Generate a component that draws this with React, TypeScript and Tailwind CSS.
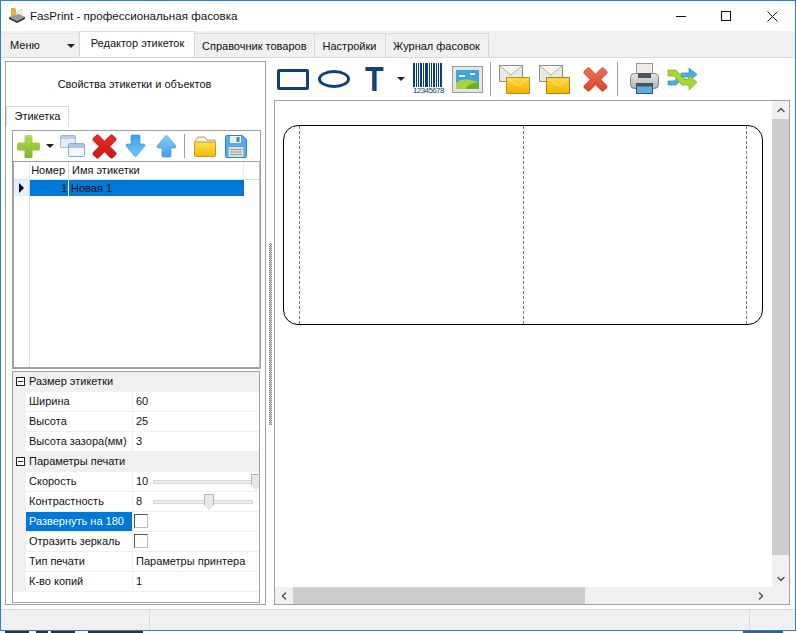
import { ChevronUp, ChevronDown, ChevronLeft, ChevronRight } from "lucide-react";

// Small toolbar icons drawn to match the app's glossy bitmap set
function PlusIcon() {
  return (
    <svg width="25" height="25" viewBox="0 0 25 25">
      <defs>
        <linearGradient id="plusFill" x1="0" y1="0" x2="0" y2="1">
          <stop offset="0" stopColor="#b5dc5a" />
          <stop offset="1" stopColor="#7db52a" />
        </linearGradient>
      </defs>
      <path
        d="M10 1h5a1.500 1.500 0 0 1 1.500 1.500V8.500h6A1.500 1.500 0 0 1 24 10v5a1.500 1.500 0 0 1-1.500 1.500h-6v6A1.500 1.500 0 0 1 15 24h-5a1.500 1.500 0 0 1-1.500-1.500v-6h-6A1.500 1.500 0 0 1 1 15v-5a1.500 1.500 0 0 1 1.500-1.500h6v-6A1.500 1.500 0 0 1 10 1z"
        fill="url(#plusFill)"
      />
    </svg>
  );
}

function RedX({ id, top, bottom, stroke }: { id: string; top: string; bottom: string; stroke: string }) {
  return (
    <svg width="27" height="27" viewBox="0 0 27 27">
      <defs>
        <linearGradient id={id} x1="0" y1="0" x2="0" y2="1">
          <stop offset="0" stopColor={top} />
          <stop offset="1" stopColor={bottom} />
        </linearGradient>
      </defs>
      <path
        d="M5 2.500a2 2 0 0 1 2.800 0l5.700 5.700 5.700-5.700a2 2 0 0 1 2.800 0l2.500 2.500a2 2 0 0 1 0 2.800l-5.700 5.700 5.700 5.700a2 2 0 0 1 0 2.800l-2.500 2.500a2 2 0 0 1-2.800 0l-5.700-5.700-5.700 5.700a2 2 0 0 1-2.800 0l-2.500-2.500a2 2 0 0 1 0-2.800l5.700-5.700-5.700-5.700a2 2 0 0 1 0-2.800z"
        fill={`url(#${id})`}
        stroke={stroke}
        strokeWidth="0.8"
      />
    </svg>
  );
}

function Windows() {
  return (
    <svg width="25" height="22" viewBox="0 0 25 22">
      <rect x="0.500" y="0.500" width="15" height="12" rx="1" fill="#e3edf7" stroke="#9dbbd9" />
      <rect x="1" y="1" width="14" height="3" fill="#b5cfe9" />
      <rect x="8.500" y="8.500" width="16" height="13" rx="1" fill="#f2f6fb" stroke="#86abd0" />
      <rect x="9" y="9" width="15" height="4" fill="#a9c6e4" />
    </svg>
  );
}

function ArrowDown() {
  return (
    <svg width="21" height="24" viewBox="0 0 21 24">
      <defs>
        <linearGradient id="downFill" x1="0" y1="0" x2="0" y2="1">
          <stop offset="0" stopColor="#3f9fe8" />
          <stop offset="1" stopColor="#79c3f5" />
        </linearGradient>
      </defs>
      <path
        d="M7 1h7a1 1 0 0 1 1 1v8h3.500a1.500 1.500 0 0 1 1 2.600l-8 9.400a1.300 1.300 0 0 1-2 0l-8-9.400a1.500 1.500 0 0 1 1-2.600H6V2a1 1 0 0 1 1-1z"
        fill="url(#downFill)"
        stroke="#3a8ed0"
        strokeWidth="0.6"
      />
    </svg>
  );
}

function ArrowUp() {
  return (
    <svg width="21" height="24" viewBox="0 0 21 24">
      <defs>
        <linearGradient id="upFill" x1="0" y1="0" x2="0" y2="1">
          <stop offset="0" stopColor="#8accf7" />
          <stop offset="1" stopColor="#3f9fe8" />
        </linearGradient>
      </defs>
      <path
        d="M7 23h7a1 1 0 0 0 1-1v-8h3.500a1.500 1.500 0 0 0 1-2.600l-8-9.400a1.300 1.300 0 0 0-2 0l-8 9.400a1.500 1.500 0 0 0 1 2.600H6v8a1 1 0 0 0 1 1z"
        fill="url(#upFill)"
        stroke="#3a8ed0"
        strokeWidth="0.6"
      />
    </svg>
  );
}

function Folder() {
  return (
    <svg width="22" height="22" viewBox="0 0 22 22">
      <defs>
        <linearGradient id="folderFill" x1="0" y1="0" x2="0" y2="1">
          <stop offset="0" stopColor="#ffe14a" />
          <stop offset="1" stopColor="#f8b800" />
        </linearGradient>
      </defs>
      <path d="M1 6l3-4h7l2 3h8v3H1z" fill="#f5f1dc" stroke="#a08a3a" strokeWidth="0.8" />
      <rect x="0.500" y="7" width="21" height="14.500" rx="1" fill="url(#folderFill)" stroke="#a8862a" strokeWidth="0.8" />
    </svg>
  );
}

function Floppy() {
  return (
    <svg width="22" height="23" viewBox="0 0 22 23">
      <path d="M1.500 0.500h16l4 4v17a1 1 0 0 1-1 1h-19a1 1 0 0 1-1-1v-20a1 1 0 0 1 1-1z" fill="#55a9ec" stroke="#2f86cc" />
      <rect x="5" y="1" width="11" height="7" fill="#e8f2fb" />
      <rect x="11.500" y="2" width="3" height="5" fill="#6a7f92" />
      <rect x="3.500" y="12" width="15" height="10" fill="#dedede" />
      <path d="M5 14.500h12M5 17h12M5 19.500h12" stroke="#9c9c9c" />
    </svg>
  );
}

function Envelope({ id, top, bottom, edge }: { id: string; top: string; bottom: string; edge: string }) {
  return (
    <svg width="32" height="29" viewBox="0 0 32 29">
      <defs>
        <linearGradient id={id} x1="0" y1="0" x2="0" y2="1">
          <stop offset="0" stopColor={top} />
          <stop offset="1" stopColor={bottom} />
        </linearGradient>
      </defs>
      <rect x="0.500" y="0.500" width="23" height="16" fill="#e9e9e3" stroke="#8e8e84" />
      <path d="M1 1l11 9 11-9" fill="#f6f6f2" stroke="#b5b5aa" />
      <rect x="7.500" y="12.500" width="23" height="16" fill={`url(#${id})`} stroke={edge} />
      <path d="M8 13l11.500 8L30 13" fill="none" stroke="#f8e48a" />
    </svg>
  );
}

function Barcode() {
  const bars = [2, 1, 1, 2, 1, 3, 1, 1, 2, 1, 1, 2, 3, 1, 1, 2, 1, 1];
  return (
    <div className="flex w-[32px] flex-col items-center">
      <div className="flex h-[24px] w-[30px] gap-[1px] overflow-hidden">
        {bars.map((b, i) => (
          <div key={i} className="h-full shrink-0 bg-[#0a3d7c]" style={{ width: b }} />
        ))}
      </div>
      <span className="text-[8px] leading-[8px] tracking-[-0.6px] text-[#0a3d7c]">12345678</span>
    </div>
  );
}

function Picture() {
  return (
    <svg width="31" height="27" viewBox="0 0 31 27">
      <rect x="0.500" y="0.500" width="30" height="26" fill="#e4e4e4" stroke="#9a9a9a" />
      <rect x="4" y="4" width="23" height="19" fill="#3fa3dc" />
      <path d="M4 17c6-5 13-5 23 0v6H4z" fill="#a5d23e" />
      <path d="M14 23c2-5 8-7 13-6v6z" fill="#6ead2a" />
      <path d="M7 9h6v2H7zM18 7h5v2h-5z" fill="#e8f4fb" />
    </svg>
  );
}

function Printer() {
  return (
    <svg width="29" height="32" viewBox="0 0 29 32">
      <defs>
        <linearGradient id="printerBody" x1="0" y1="0" x2="0" y2="1">
          <stop offset="0" stopColor="#e6e9e9" />
          <stop offset="1" stopColor="#aab0b0" />
        </linearGradient>
      </defs>
      <rect x="6.500" y="0.500" width="16" height="12" fill="#eeeee6" stroke="#9a9a92" />
      <rect x="0.500" y="10.500" width="28" height="15" rx="4" fill="url(#printerBody)" stroke="#7d8283" />
      <rect x="8" y="10" width="13" height="5" fill="#4e5357" />
      <rect x="6.500" y="20.500" width="16" height="10" fill="#4fb2f2" stroke="#4a5055" />
      <rect x="7" y="21" width="15" height="2.500" fill="#4a5055" />
    </svg>
  );
}

function Shuffle() {
  return (
    <svg width="31" height="27" viewBox="0 0 31 27">
      <path d="M1 15h6l8-8h7V2l8 6.500-8 6.500v-4h-5l-8 8H1z" fill="#46b0ea" stroke="#2b86c0" strokeWidth="0.7" strokeLinejoin="round" />
      <path d="M1 4h8l8 9h5V9l8 7.500-8 7.500v-5h-7L7 10H1z" fill="#a8d82c" stroke="#7aa51a" strokeWidth="0.7" strokeLinejoin="round" />
    </svg>
  );
}

function Caret() {
  return <div className="h-0 w-0 border-x-[4px] border-t-[4px] border-x-transparent border-t-[#222]" />;
}

function AppIcon() {
  return (
    <svg width="18" height="18" viewBox="0 0 18 18">
      <path d="M3 1h4l1 2v7H3z" fill="#d9b13b" />
      <path d="M8 5l6-3v6l-6 2z" fill="#eee" stroke="#bbb" strokeWidth="0.5" />
      <path d="M1 10l10-3 6 3-8 4z" fill="#9a9a9a" />
      <path d="M1 10v2l8 4 8-4v-2l-8 4z" fill="#333" />
    </svg>
  );
}

function Sep({ h }: { h: string }) {
  return <div className={`w-px bg-[#a0a0a0] ${h}`} />;
}

function Tab({ label, active, px }: { label: string; active?: boolean; px?: string }) {
  if (active) {
    return (
      <div className="z-10 flex h-[26px] w-[116px] items-center justify-center border-x border-t border-[#d9d9d9] bg-white pb-[2px] pl-[1px]">
        {label}
      </div>
    );
  }
  return (
    <div className={`mt-[2px] flex h-[24px] items-center justify-center border-r border-t border-[#d9d9d9] bg-[#f0f0f0] pt-[1px] ${px}`}>
      {label}
    </div>
  );
}

function GroupRow({ label }: { label: string }) {
  return (
    <div className="flex h-[20px] items-center bg-[#f0f0f0] pb-px">
      <div className="ml-[3px] mr-[4px] flex h-[9px] w-[9px] items-center justify-center border border-[#222] bg-white">
        <div className="h-px w-[5px] bg-[#222]" />
      </div>
      <span>{label}</span>
    </div>
  );
}

function PropRow({
  label,
  selected,
  children,
}: {
  label: string;
  selected?: boolean;
  children?: React.ReactNode;
}) {
  return (
    <div className="flex h-[20px] bg-white">
      <div className="w-[13px] shrink-0 bg-[#f0f0f0]" />
      <div
        className={`flex w-[106px] shrink-0 items-center whitespace-nowrap border-b border-[#f0f0f0] pl-[3px] ${
          selected ? "bg-[#0078d7] text-white" : ""
        }`}
      >
        {label}
      </div>
      <div className="flex flex-1 items-center border-b border-l border-[#f0f0f0] pl-[3px]">{children}</div>
    </div>
  );
}

function SliderCell({ value, percent }: { value: string; percent: string }) {
  return (
    <>
      <span className="w-[17px] shrink-0">{value}</span>
      <div className="relative h-[4px] flex-1 border border-[#d8d8d8] bg-[#efefef]">
        <div
          className={`absolute top-[-7px] h-[17px] w-[10px] border border-[#b5b5b5] bg-[#e8e8e8] [clip-path:polygon(0_0,100%_0,100%_65%,50%_100%,0_65%)] ${percent}`}
        />
      </div>
    </>
  );
}

function CheckBox() {
  return <div className="mb-[2px] ml-[-2px] h-[14px] w-[14px] border border-b-[#bbb] border-l-[#555] border-r-[#bbb] border-t-[#555] bg-white" />;
}

export default function App() {
  return (
    <div className="flex h-[633px] w-[796px] flex-col overflow-hidden bg-white font-['Liberation_Sans',sans-serif] text-[11px] text-[#111]">
      <div className="flex h-[631px] shrink-0 flex-col border border-[#2f7fb8] bg-[#f0f0f0]">
        {/* Title bar */}
        <div className="flex h-[30px] shrink-0 items-center bg-white pl-[7px]">
          <AppIcon />
          <span className="ml-[4px] text-[11.6px]">FasPrint - профессиональная фасовка</span>
          <div className="ml-auto flex items-center pr-[17px]">
            <svg width="10" height="10" viewBox="0 0 10 10" shapeRendering="crispEdges">
              <path d="M0 5.500h10" stroke="#111" />
            </svg>
            <svg className="ml-[35px]" width="10" height="10" viewBox="0 0 10 10" shapeRendering="crispEdges">
              <rect x="0.500" y="0.500" width="9" height="9" fill="none" stroke="#111" />
            </svg>
            <svg className="ml-[36px]" width="11" height="11" viewBox="0 0 11 11">
              <path d="M0.500 0.500l10 10M10.500 0.500l-10 10" stroke="#111" />
            </svg>
          </div>
        </div>

        {/* Main tabs */}
        <div className="flex h-[26px] shrink-0 items-end">
          <div className="flex h-[24px] w-[78px] items-center justify-between border-t border-[#e5e5e5] pl-[9px] pr-[4px]">
            <span>Меню</span>
            <Caret />
          </div>
          <Tab label="Редактор этикеток" active />
          <Tab label="Справочник товаров" px="px-[7px]" />
          <Tab label="Настройки" px="w-[71px]" />
          <Tab label="Журнал фасовок" px="w-[103px]" />
        </div>

        {/* Body */}
        <div className="flex min-h-0 flex-1 border-t border-[#d9d9d9] bg-white pl-[1px] pr-[5px]">
          {/* Left panel */}
          <div className="mb-[4px] ml-[3px] mt-[3px] flex w-[261px] shrink-0 flex-col border border-[#a0a0a0] bg-white">
            <div className="flex h-[44px] shrink-0 items-center justify-center pr-[2px] pt-[1px]">
              Свойства этикетки и объектов
            </div>
            <div className="flex h-[20px] shrink-0">
              <div className="flex w-[63px] items-center justify-center border-x border-t border-[#d9d9d9]">
                Этикетка
              </div>
            </div>
            <div className="ml-[6px] mr-[4px] mt-[4px] flex h-[239px] shrink-0 flex-col border border-[#a0a0a0]">
              <div className="flex h-[30px] shrink-0 items-center pl-[3px]">
                <PlusIcon />
                <div className="ml-[5px] mr-[6px]">
                  <Caret />
                </div>
                <Windows />
                <div className="ml-[6px]">
                  <RedX id="xRed" top="#ee2b2b" bottom="#d01414" stroke="#b01010" />
                </div>
                <div className="ml-[7px]">
                  <ArrowDown />
                </div>
                <div className="ml-[10px]">
                  <ArrowUp />
                </div>
                <div className="ml-[7px] mr-[9px]">
                  <Sep h="h-[24px]" />
                </div>
                <Folder />
                <div className="ml-[9px]">
                  <Floppy />
                </div>
              </div>
              <div className="flex min-h-0 flex-1 flex-col border border-[#a0a0a0] border-r-[#c0c0c0]">
                <div className="flex h-[18px] shrink-0 border-b border-[#e0e0e0]">
                  <div className="w-[16px] border-r border-[#e8e8e8]" />
                  <div className="flex w-[39px] items-center justify-end border-r border-[#d8d8d8] pr-[3px]">Номер</div>
                  <div className="flex w-[175px] items-center border-r border-[#e8e8e8] pl-[3px]">Имя этикетки</div>
                </div>
                <div className="flex h-[16px] shrink-0">
                  <div className="flex w-[16px] items-center justify-center border-r border-[#d0d0d0] bg-[#e4f0fb]">
                    <div className="h-0 w-0 border-y-[5px] border-l-[5px] border-y-transparent border-l-black" />
                  </div>
                  <div className="flex w-[39px] items-center justify-end border-r border-white bg-[#0078d7] pr-[1px]">1</div>
                  <div className="flex w-[175px] items-center bg-[#0078d7] pl-[2px]">Новая 1</div>
                </div>
                <div className="min-h-0 flex-1">
                  <div className="h-full w-[16px] border-r border-[#e0e0e0]" />
                </div>
              </div>
            </div>
            {/* Property grid */}
            <div className="ml-[6px] mr-[5px] mt-[2px] h-[232px] shrink-0 overflow-hidden border border-[#a0a0a0]">
              <GroupRow label="Размер этикетки" />
              <PropRow label="Ширина">60</PropRow>
              <PropRow label="Высота">25</PropRow>
              <PropRow label="Высота зазора(мм)">3</PropRow>
              <GroupRow label="Параметры печати" />
              <PropRow label="Скорость">
                <SliderCell value="10" percent="right-[-3px]" />
              </PropRow>
              <PropRow label="Контрастность">
                <div className="flex flex-1 items-center pr-[6px]">
                  <SliderCell value="8" percent="left-[50px]" />
                </div>
              </PropRow>
              <PropRow label="Развернуть на 180" selected>
                <CheckBox />
              </PropRow>
              <PropRow label="Отразить зеркаль">
                <CheckBox />
              </PropRow>
              <PropRow label="Тип печати">Параметры принтера</PropRow>
              <PropRow label="К-во копий">1</PropRow>
            </div>
          </div>

          {/* Splitter grip */}
          <div className="flex w-[8px] shrink-0 items-center justify-center">
            <div className="h-[182px] w-[3px] bg-[repeating-conic-gradient(#777_0_25%,#eee_0_50%)] bg-[length:2px_2px]" />
          </div>

          {/* Right panel */}
          <div className="flex min-w-0 flex-1 flex-col">
            <div className="flex h-[42px] shrink-0 items-center pl-[3px]">
              <div className="h-[21px] w-[32px] rounded-[2px] border-[3px] border-[#0f3f7c]" />
              <div className="ml-[9px] h-[18px] w-[32px] rounded-[50%] border-[3px] border-[#0f3f7c]" />
              <span className="ml-[15px] origin-left scale-x-[0.87] text-[35px] font-bold leading-[36px] text-[#0f3f7c]">T</span>
              <div className="ml-[11px]">
                <Caret />
              </div>
              <div className="ml-[7px]">
                <Barcode />
              </div>
              <div className="ml-[8px]">
                <Picture />
              </div>
              <div className="ml-[7px] mr-[8px]">
                <Sep h="h-[34px]" />
              </div>
              <Envelope id="envA" top="#ffd83d" bottom="#f5ad00" edge="#c08f10" />
              <div className="ml-[8px]">
                <Envelope id="envB" top="#ffd83d" bottom="#f5b400" edge="#a88410" />
              </div>
              <div className="ml-[11px]">
                <RedX id="xSoft" top="#ef6d50" bottom="#d9482f" stroke="#b9402c" />
              </div>
              <div className="ml-[8px] mr-[12px]">
                <Sep h="h-[34px]" />
              </div>
              <Printer />
              <div className="ml-[8px]">
                <Shuffle />
              </div>
            </div>
            <div className="mb-[4px] flex min-h-0 flex-1 flex-col border border-[#a0a0a0]">
              <div className="flex min-h-0 flex-1">
                <div className="min-w-0 flex-1 bg-white pl-[8px] pt-[24px]">
                  <div className="flex h-[200px] w-[480px] overflow-hidden rounded-[15px] border border-black">
                    <div className="w-[16px] border-r border-dashed border-[#777]" />
                    <div className="w-[224px] border-r border-dashed border-[#777]" />
                    <div className="w-[223px] border-r border-dashed border-[#777]" />
                  </div>
                </div>
                <div className="flex w-[17px] shrink-0 flex-col items-center bg-[#f0f0f0] text-[#555]">
                  <div className="flex h-[17px] items-center">
                    <ChevronUp size={12} strokeWidth={3} />
                  </div>
                  <div className="mt-[1px] h-[436px] w-full bg-[#cdcdcd]" />
                  <div className="mt-auto flex h-[17px] items-center">
                    <ChevronDown size={12} strokeWidth={3} />
                  </div>
                </div>
              </div>
              <div className="flex h-[17px] shrink-0 items-center bg-[#f0f0f0] text-[#555]">
                <div className="flex w-[18px] justify-center">
                  <ChevronLeft size={12} strokeWidth={3} />
                </div>
                <div className="h-full w-[292px] bg-[#cdcdcd]" />
                <div className="ml-auto flex w-[34px] justify-start">
                  <ChevronRight size={12} strokeWidth={3} />
                </div>
              </div>
            </div>
          </div>
        </div>

        {/* Status bar */}
        <div className="flex h-[21px] shrink-0 border-t border-[#d9d9d9] bg-[#f0f0f0]">
          <div className="w-[149px] border-r border-[#d9d9d9]" />
          <div className="flex-1 border-r border-[#d9d9d9]" />
          <div className="w-[45px]" />
        </div>
      </div>

      {/* Desktop text cut off below the window */}
      <div className="flex h-[2px] shrink-0 bg-white">
        <div className="ml-[5px] w-[24px] bg-[#333]" />
        <div className="ml-[7px] w-[12px] bg-[#333]" />
        <div className="ml-[3px] w-[24px] bg-[#333]" />
        <div className="ml-[13px] w-[55px] bg-[#333]" />
        <div className="ml-[600px] w-[40px] bg-[#2f5f9f]" />
      </div>
    </div>
  );
}
